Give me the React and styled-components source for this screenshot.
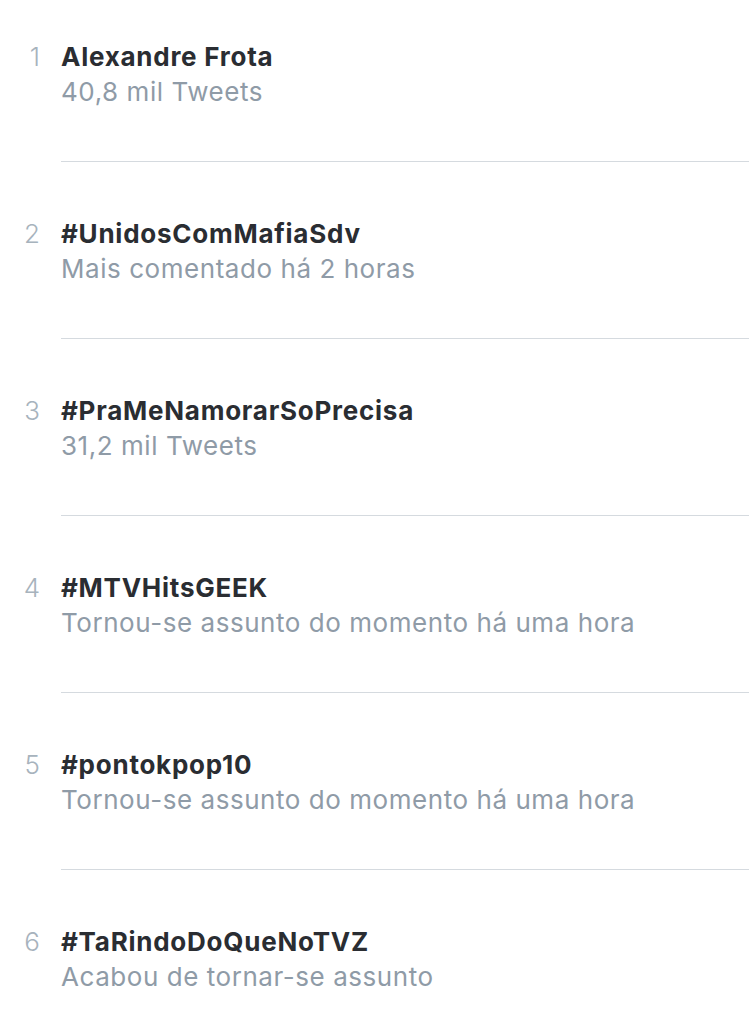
import React from "react";
import styled, { createGlobalStyle } from "styled-components";

const GlobalStyle = createGlobalStyle`
  html, body {
    margin: 0;
    padding: 0;
    background: #ffffff;
  }
  body {
    font-family: Inter, "Noto Sans", "Liberation Sans", sans-serif;
    -webkit-font-smoothing: antialiased;
  }
`;

const List = styled.ol`
  list-style: none;
  margin: 0;
  padding: 0;
  width: 749px;
  overflow: hidden;
`;

const Item = styled.li`
  display: flex;
  align-items: baseline;
`;

const Rank = styled.span`
  flex: 0 0 40px;
  text-align: right;
  font-size: 26px;
  font-weight: 300;
  color: #a7b3bd;
`;

const Body = styled.div`
  flex: 1;
  margin-left: 21px;
  display: flex;
  flex-direction: column;
  padding: ${(p) => (p.$first ? "39px" : "54px")} 0 52px;
  border-bottom: 1px solid #d5dadf;
`;

const Title = styled.span`
  font-size: 26px;
  line-height: 36px;
  font-weight: 700;
  color: #2a2d32;
  letter-spacing: 0.75px;
`;

const Meta = styled.span`
  font-size: 26px;
  line-height: 34px;
  font-weight: 400;
  color: #8f9ba7;
  letter-spacing: 0.55px;
`;

const trends = [
  { title: "Alexandre Frota", meta: "40,8 mil Tweets" },
  { title: "#UnidosComMafiaSdv", meta: "Mais comentado há 2 horas" },
  { title: "#PraMeNamorarSoPrecisa", meta: "31,2 mil Tweets" },
  { title: "#MTVHitsGEEK", meta: "Tornou-se assunto do momento há uma hora" },
  { title: "#pontokpop10", meta: "Tornou-se assunto do momento há uma hora" },
  { title: "#TaRindoDoQueNoTVZ", meta: "Acabou de tornar-se assunto" },
];

export default function App() {
  return (
    <>
      <GlobalStyle />
      <List>
        {trends.map((t, i) => (
          <Item key={t.title}>
            <Rank>{i + 1}</Rank>
            <Body $first={i === 0}>
              <Title>{t.title}</Title>
              <Meta>{t.meta}</Meta>
            </Body>
          </Item>
        ))}
      </List>
    </>
  );
}
